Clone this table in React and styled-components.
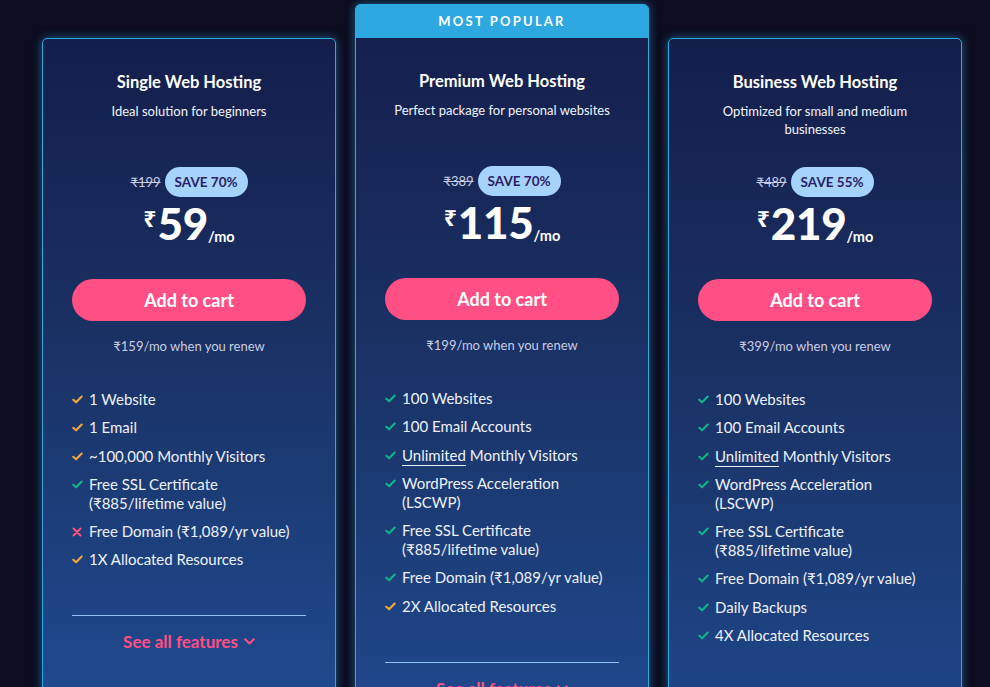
import React from "react";
import styled, { createGlobalStyle } from "styled-components";

const Global = createGlobalStyle`
  html, body { margin: 0; padding: 0; background: #0d0c20; overflow: hidden; }
  body { font-family: Lato, "Noto Sans", sans-serif; color: #fff; }
  * { box-sizing: border-box; }
`;

const Page = styled.div`
  width: 990px;
  height: 687px;
  overflow: hidden;
  padding: 4px 0 0 42px;
`;

const Grid = styled.div`
  display: grid;
  grid-template-columns: repeat(3, 294px);
  column-gap: 19px;
  align-items: start;
`;

const Card = styled.div`
  margin-top: ${(p) => (p.$popular ? "0" : "34px")};
  border: 1px solid #2ea8e0;
  border-radius: 5px;
  box-shadow: 0 0 10px rgba(46, 168, 224, 0.55);
  overflow: hidden;
  background: linear-gradient(180deg, #141e4b 0%, #1a3164 45%, #1f4a8e 100%);
  display: flex;
  flex-direction: column;
`;

const Ribbon = styled.div`
  height: 34px;
  margin-top: -1px;
  background: #2ea8e0;
  display: flex;
  align-items: center;
  justify-content: center;
  font-weight: 700;
  font-size: 13px;
  letter-spacing: 2.2px;
  color: #fff;
`;

const Body = styled.div`
  padding: 33px 29px 40px;
  display: flex;
  flex-direction: column;
  align-items: center;
`;

const Title = styled.h3`
  margin: 0;
  font-size: 16.5px;
  line-height: 20px;
  font-weight: 700;
  text-align: center;
`;

const Subtitle = styled.p`
  margin: 10px 0 0;
  min-height: 36px;
  font-size: 13px;
  line-height: 18px;
  text-align: center;
  color: #f1f3fa;
  padding: 0 6px;
`;

const OldRow = styled.div`
  margin-top: 29px;
  display: flex;
  align-items: center;
  gap: 4px;
  height: 30px;
`;

const OldPrice = styled.span`
  font-size: 13px;
  color: #c9cde2;
  text-decoration: line-through;
`;

const Save = styled.span`
  background: #a6d3f9;
  color: #2c1f6b;
  font-size: 13.5px;
  font-weight: 700;
  height: 30px;
  padding: 0 10px;
  border-radius: 15px;
  display: inline-flex;
  align-items: center;
`;

const Price = styled.div`
  margin-top: 3px;
  height: 46px;
  display: flex;
  align-items: flex-end;
  font-weight: 800;
  line-height: 1;
`;

const Currency = styled.span`
  font-size: 23px;
  font-family: "Noto Sans", sans-serif;
  font-weight: 700;
  align-self: flex-start;
  margin-top: 7px;
  margin-right: 1px;
`;

const Amount = styled.span`
  font-size: 44px;
  font-weight: 900;
  letter-spacing: -0.3px;
  margin-bottom: 1px;
`;

const Per = styled.span`
  font-size: 14.5px;
  font-weight: 700;
  margin-bottom: 2px;
`;

const CartButton = styled.button`
  margin-top: 33px;
  width: 100%;
  height: 42px;
  border: 0;
  border-radius: 21px;
  background: #ff4f84;
  color: #fff;
  font-family: inherit;
  font-size: 18px;
  font-weight: 700;
  cursor: pointer;
`;

const Renew = styled.p`
  margin: 16px 0 0;
  font-size: 13px;
  line-height: 18px;
  color: #c9cde2;
`;

const Features = styled.ul`
  list-style: none;
  margin: 35px 0 0;
  padding: 0;
  width: 100%;
  display: flex;
  flex-direction: column;
  gap: 9.3px;
`;

const Feature = styled.li`
  display: flex;
  align-items: flex-start;
  gap: 6px;
  font-size: 15px;
  line-height: 19px;
  color: #eef0f8;
`;

const IconBox = styled.span`
  flex: 0 0 11px;
  height: 19px;
  display: flex;
  align-items: center;
`;

const Under = styled.span`
  border-bottom: 1.5px solid #eef0f8;
  padding-bottom: 1px;
`;

const Divider = styled.hr`
  width: 100%;
  margin: 46px 0 0;
  border: 0;
  border-top: 1px solid #8fc3f3;
`;

const SeeAll = styled.a`
  margin-top: 15px;
  display: inline-flex;
  align-items: center;
  gap: 6px;
  color: #ff4f84;
  font-size: 17px;
  font-weight: 700;
  text-decoration: none;
`;

const COLORS = { orange: "#f0a83a", green: "#10b48a", red: "#fc5185" };

const Mark = ({ kind }) => (
  <IconBox>
    {kind === "red" ? (
      <svg width="10" height="10" viewBox="0 0 10 10">
        <path d="M1.5 1.5 L8.5 8.5 M8.5 1.5 L1.5 8.5" stroke={COLORS.red} strokeWidth="2" strokeLinecap="round" />
      </svg>
    ) : (
      <svg width="11" height="9" viewBox="0 0 11 9">
        <path d="M1.3 4.8 L4.1 7.3 L9.7 1.6" fill="none" stroke={COLORS[kind]} strokeWidth="2.1" strokeLinecap="round" strokeLinejoin="round" />
      </svg>
    )}
  </IconBox>
);

const Chevron = () => (
  <svg width="11" height="7" viewBox="0 0 11 7">
    <path d="M1.2 1.2 L5.5 5.5 L9.8 1.2" fill="none" stroke="#ff4f84" strokeWidth="2" strokeLinecap="round" strokeLinejoin="round" />
  </svg>
);

const plans = [
  {
    title: "Single Web Hosting",
    subtitle: "Ideal solution for beginners",
    old: "₹199",
    save: "SAVE 70%",
    price: "59",
    renew: "₹159/mo when you renew",
    features: [
      ["orange", "1 Website"],
      ["orange", "1 Email"],
      ["orange", "~100,000 Monthly Visitors"],
      ["green", "SSL"],
      ["red", "Free Domain (₹1,089/yr value)"],
      ["orange", "1X Allocated Resources"],
    ],
  },
  {
    popular: true,
    title: "Premium Web Hosting",
    subtitle: "Perfect package for personal websites",
    old: "₹389",
    save: "SAVE 70%",
    price: "115",
    renew: "₹199/mo when you renew",
    features: [
      ["green", "100 Websites"],
      ["green", "100 Email Accounts"],
      ["green", "UNL"],
      ["green", "WP"],
      ["green", "SSL"],
      ["green", "Free Domain (₹1,089/yr value)"],
      ["orange", "2X Allocated Resources"],
    ],
  },
  {
    title: "Business Web Hosting",
    subtitle: "Optimized for small and medium businesses",
    old: "₹489",
    save: "SAVE 55%",
    price: "219",
    renew: "₹399/mo when you renew",
    features: [
      ["green", "100 Websites"],
      ["green", "100 Email Accounts"],
      ["green", "UNL"],
      ["green", "WP"],
      ["green", "SSL"],
      ["green", "Free Domain (₹1,089/yr value)"],
      ["green", "Daily Backups"],
      ["green", "4X Allocated Resources"],
    ],
  },
];

const FeatureText = ({ text }) => {
  if (text === "UNL")
    return (
      <span>
        <Under>Unlimited</Under> Monthly Visitors
      </span>
    );
  if (text === "SSL")
    return (
      <span>
        Free SSL Certificate
        <br />
        (₹885/lifetime value)
      </span>
    );
  if (text === "WP")
    return (
      <span>
        WordPress Acceleration
        <br />
        (LSCWP)
      </span>
    );
  return <span>{text}</span>;
};

export default function App() {
  return (
    <Page>
      <Global />
      <Grid>
        {plans.map((p) => (
          <Card key={p.title} $popular={p.popular}>
            {p.popular && <Ribbon>MOST POPULAR</Ribbon>}
            <Body>
              <Title>{p.title}</Title>
              <Subtitle>{p.subtitle}</Subtitle>
              <OldRow>
                <OldPrice>{p.old}</OldPrice>
                <Save>{p.save}</Save>
              </OldRow>
              <Price>
                <Currency>₹</Currency>
                <Amount>{p.price}</Amount>
                <Per>/mo</Per>
              </Price>
              <CartButton>Add to cart</CartButton>
              <Renew>{p.renew}</Renew>
              <Features>
                {p.features.map(([k, t], i) => (
                  <Feature key={i}>
                    <Mark kind={k} />
                    <FeatureText text={t} />
                  </Feature>
                ))}
              </Features>
              <Divider />
              <SeeAll href="#">
                See all features <Chevron />
              </SeeAll>
            </Body>
          </Card>
        ))}
      </Grid>
    </Page>
  );
}
